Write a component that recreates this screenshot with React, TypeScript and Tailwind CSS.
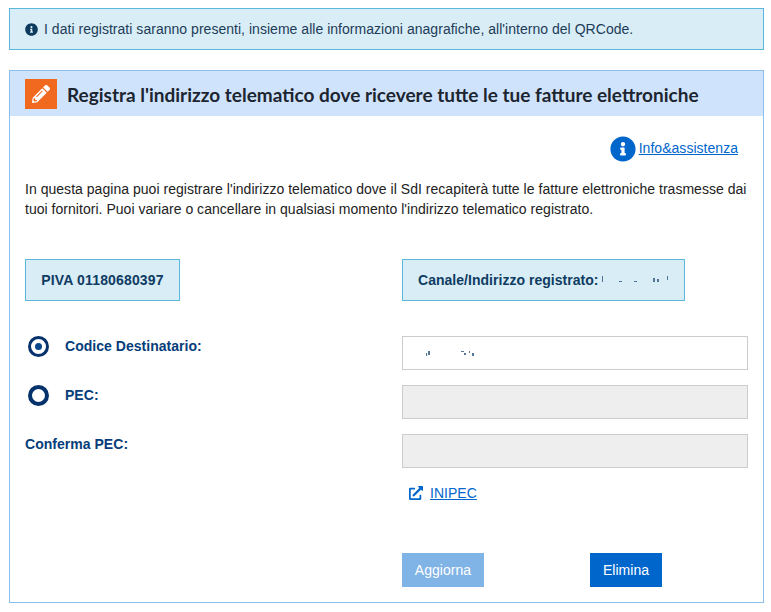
import { FaExternalLinkAlt, FaInfoCircle, FaPencilAlt } from "react-icons/fa";

function Specks({ width, dots }: { width: number; dots: number[][] }) {
  // the reference has the value scrubbed out, only a few dark pixels are left
  return (
    <svg width={width} height={12} viewBox={`0 0 ${width} 12`} className="shrink-0">
      {dots.map(([x, y, w, h], i) => (
        <rect key={i} x={x} y={y} width={w} height={h} fill="#2c5580" opacity={0.8} />
      ))}
    </svg>
  );
}

function Radio({ checked }: { checked?: boolean }) {
  return (
    <span
      className={`w-[21px] h-[21px] rounded-full bg-white flex items-center justify-center shrink-0 border-[#06326b] ${
        checked ? "border-[3.5px]" : "border-[4px]"
      }`}
    >
      {checked && <span className="w-[7px] h-[7px] rounded-full bg-[#06478c]" />}
    </span>
  );
}

function Row({ children, disabled, mt }: { children: React.ReactNode; disabled?: boolean; mt: string }) {
  return (
    <div className={`grid grid-cols-[377px_346px] ${mt}`}>
      <div className="flex items-start h-[34px]">{children}</div>
      <div className={`h-[34px] border border-[#cccccc] flex items-center pl-[21px] ${disabled ? "bg-[#eeeeee]" : "bg-white"}`}>
        {!disabled && (
          <Specks
            width={60}
            dots={[
              [2, 6, 1, 3],
              [4, 4, 2, 4],
              [37, 4, 3, 1],
              [40, 6, 2, 2],
              [45, 4, 1, 2],
              [48, 6, 2, 3],
            ]}
          />
        )}
      </div>
    </div>
  );
}

export default function App() {
  return (
    <div className="w-[771px] h-[612px] bg-white pt-2 pl-[9px] pr-[7px] font-['Liberation_Sans',Arial,sans-serif] text-[14px] tracking-[0.03px] text-[#222222] overflow-hidden">
      {/* Alert */}
      <div className="h-[42px] bg-[#d9edf7] border border-[#5bb8dc] flex items-center pl-[15px] gap-[6px] text-[#1d3c57]">
        <FaInfoCircle className="w-[13px] h-[13px] text-[#0d3b5e]" />
        <span>I dati registrati saranno presenti, insieme alle informazioni anagrafiche, all'interno del QRCode.</span>
      </div>

      {/* Panel */}
      <div className="mt-5 h-[533px] border border-[#8dbfec]">
        <div className="h-[45px] bg-[#cfe4fc] flex items-center pl-[15px] pt-[1px] gap-[10px]">
          <div className="w-8 h-[30px] bg-[#f0691f] flex items-center justify-center">
            <FaPencilAlt className="w-[18px] h-[18px] text-white" />
          </div>
          <h1 className="font-['Lato',sans-serif] font-bold text-[19px] tracking-normal text-[#1c2530] leading-none whitespace-nowrap">
            Registra l'indirizzo telematico dove ricevere tutte le tue fatture elettroniche
          </h1>
        </div>

        <div className="px-[15px]">
          <div className="flex justify-end items-center mt-[20px] pr-[10px] h-[26px]">
            <FaInfoCircle className="w-[26px] h-[26px] text-[#0066cc] mr-[3px]" />
            <a href="#" className="text-[#0066cc] underline relative -top-[1px]">
              Info&amp;assistenza
            </a>
          </div>

          <p className="mt-[17px] leading-[20px] text-[#222222] w-[730px]">
            In questa pagina puoi registrare l'indirizzo telematico dove il SdI recapiterà tutte le fatture elettroniche trasmesse dai tuoi fornitori. Puoi variare o cancellare in qualsiasi momento l'indirizzo telematico registrato.
          </p>

          <div className="grid grid-cols-[377px_346px] mt-[40px] font-bold text-[#0f3c62]">
            <div className="w-[155px] h-[42px] bg-[#d9edf7] border border-[#5bb8dc] flex items-center justify-center tracking-[0.15px]">
              PIVA 01180680397
            </div>
            <div className="w-[283px] h-[42px] bg-[#d9edf7] border border-[#5bb8dc] flex items-center pl-[15px]">
              Canale/Indirizzo registrato:
              <Specks
                width={70}
                dots={[
                  [3, 2, 1, 6],
                  [20, 7, 3, 1],
                  [35, 7, 3, 1],
                  [54, 4, 2, 4],
                  [58, 5, 2, 3],
                  [68, 2, 1, 4],
                ]}
              />
            </div>
          </div>

          <Row mt="mt-[35px]">
            <div className="flex items-center gap-[16px] pl-[3px] h-[21px]">
              <Radio checked />
              <span className="font-bold text-[#063d7a]">Codice Destinatario:</span>
            </div>
          </Row>
          <Row mt="mt-[15px]" disabled>
            <div className="flex items-center gap-[16px] pl-[3px] h-[21px]">
              <Radio />
              <span className="font-bold text-[#063d7a]">PEC:</span>
            </div>
          </Row>
          <Row mt="mt-[15px]" disabled>
            <span className="font-bold text-[#063d7a] leading-[20px]">Conferma PEC:</span>
          </Row>

          <div className="pl-[384px] mt-[16px] flex items-center gap-[7px] h-[18px]">
            <FaExternalLinkAlt className="w-[14px] h-[14px] text-[#0066cc]" />
            <a href="#" className="text-[#0066cc] underline">
              INIPEC
            </a>
          </div>

          <div className="pl-[377px] mt-[51px] flex">
            <button className="w-[82px] h-[34px] bg-[#80b3e6] text-white">Aggiorna</button>
            <button className="ml-[106px] w-[72px] h-[34px] bg-[#0066cc] text-white">Elimina</button>
          </div>
        </div>
      </div>
    </div>
  );
}
